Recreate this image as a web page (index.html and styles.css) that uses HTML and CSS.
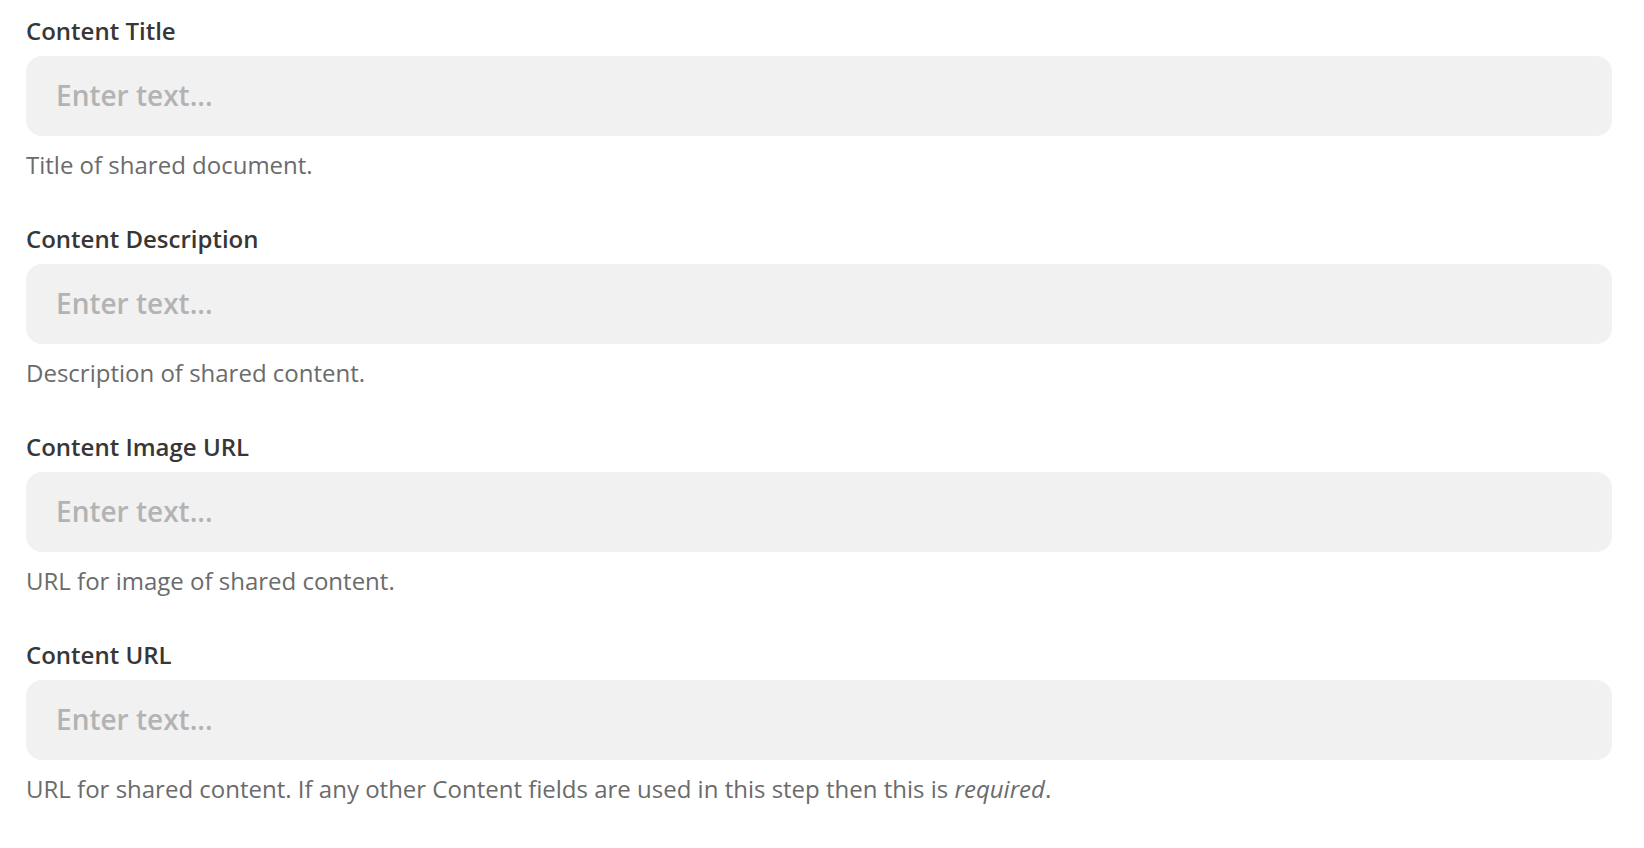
FILE: index.html
```html
<!DOCTYPE html>
<html lang="en">
<head>
<meta charset="utf-8">
<title>Content fields</title>
<link rel="stylesheet" href="styles.css">
</head>
<body>
<form class="form">
  <div class="field">
    <label class="field-label" for="f-title">Content Title</label>
    <input class="field-input" id="f-title" type="text" placeholder="Enter text...">
    <p class="field-help">Title of shared document.</p>
  </div>
  <div class="field">
    <label class="field-label" for="f-desc">Content Description</label>
    <input class="field-input" id="f-desc" type="text" placeholder="Enter text...">
    <p class="field-help">Description of shared content.</p>
  </div>
  <div class="field">
    <label class="field-label" for="f-img">Content Image URL</label>
    <input class="field-input" id="f-img" type="text" placeholder="Enter text...">
    <p class="field-help">URL for image of shared content.</p>
  </div>
  <div class="field">
    <label class="field-label" for="f-url">Content URL</label>
    <input class="field-input" id="f-url" type="text" placeholder="Enter text...">
    <p class="field-help">URL for shared content. If any other Content fields are used in this step then this is <em>required</em>.</p>
  </div>
</form>
</body>
</html>
```

FILE: styles.css
```css
html, body {
  margin: 0;
  padding: 0;
  background: #ffffff;
}

body {
  font-family: "Open Sans", "Noto Sans", "Liberation Sans", sans-serif;
}

.form {
  display: flex;
  flex-direction: column;
  gap: 42px;
  padding: 15px 32px 0 26px;
}

.field {
  display: flex;
  flex-direction: column;
}

.field-label {
  font-size: 24px;
  line-height: 32px;
  font-weight: 600;
  color: #373737;
  margin-bottom: 9px;
}

.field-input {
  box-sizing: border-box;
  height: 80px;
  width: 100%;
  border: none;
  outline: none;
  border-radius: 16px;
  background: #f1f1f1;
  padding: 0 29px 2px 30px;
  font-family: "Open Sans", "Noto Sans", "Liberation Sans", sans-serif;
  font-size: 28px;
  font-weight: 600;
  color: #373737;
}

.field-input::placeholder {
  color: #b3b3b3;
  opacity: 1;
}

.field-help {
  margin: 13px 0 0;
  font-size: 24px;
  line-height: 32px;
  font-weight: 400;
  color: #6b6b6b;
}

.field-help em {
  font-style: italic;
}
```
